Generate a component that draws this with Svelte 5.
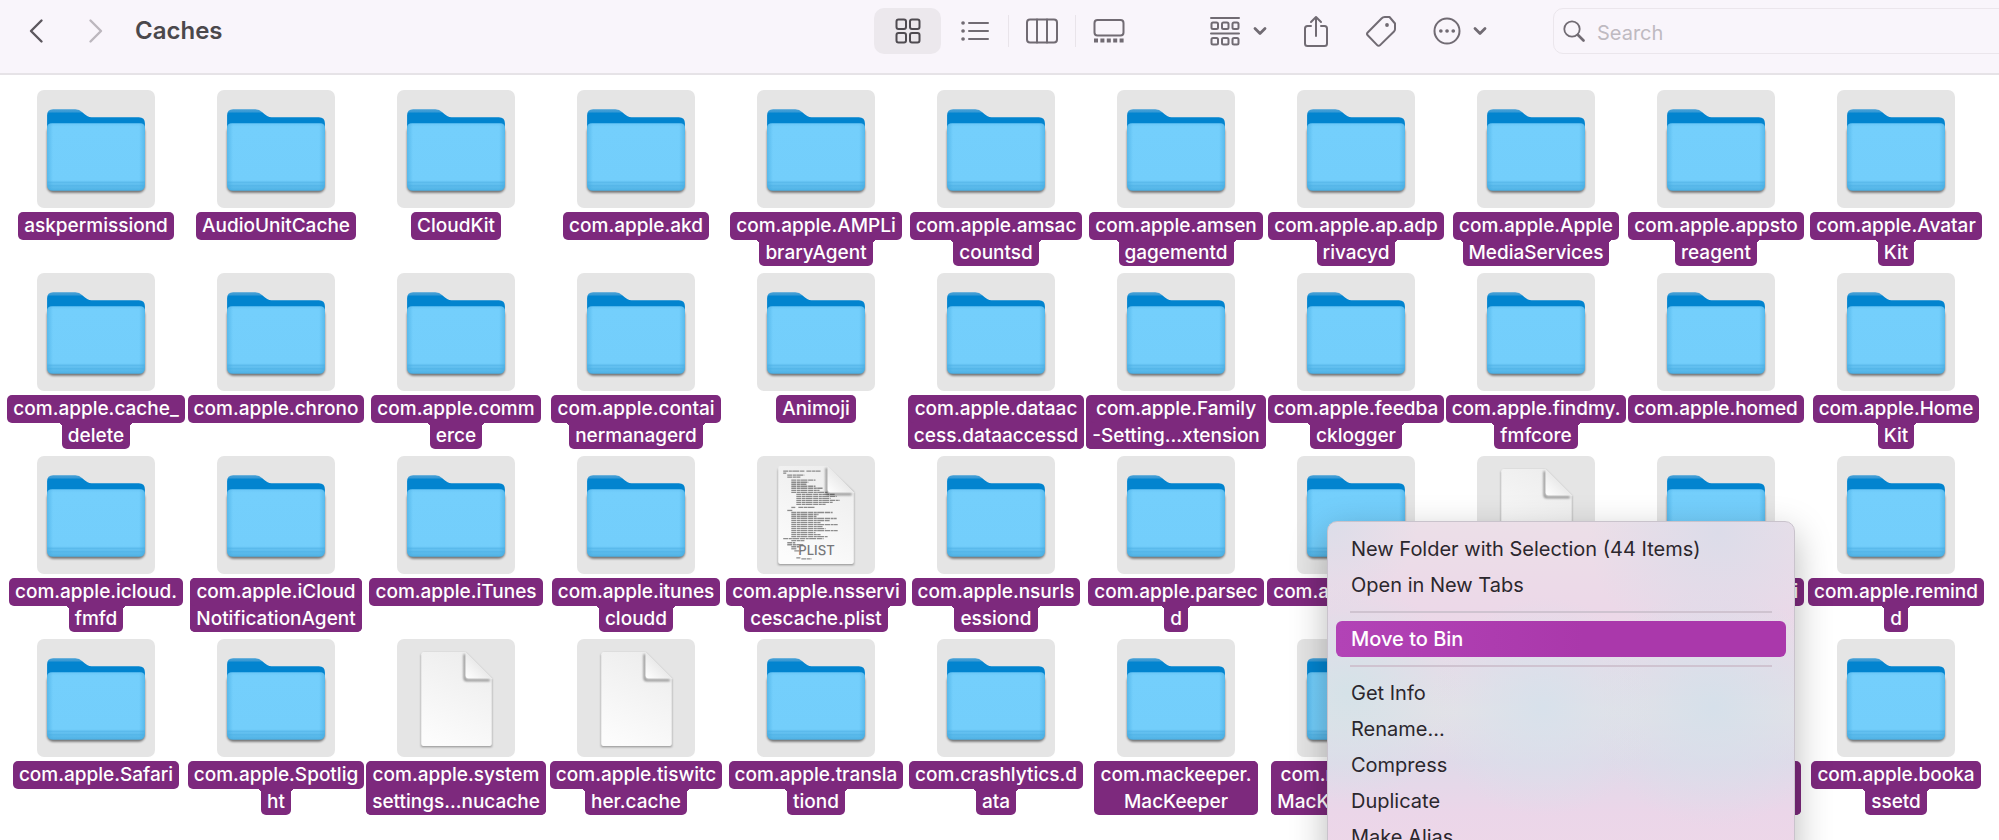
<script>
  const items = [
    ['askpermissiond'],
    ['AudioUnitCache'],
    ['CloudKit'],
    ['com.apple.akd'],
    ['com.apple.AMPLi', 'braryAgent'],
    ['com.apple.amsac', 'countsd'],
    ['com.apple.amsen', 'gagementd'],
    ['com.apple.ap.adp', 'rivacyd'],
    ['com.apple.Apple', 'MediaServices'],
    ['com.apple.appsto', 'reagent'],
    ['com.apple.Avatar', 'Kit'],
    ['com.apple.cache_', 'delete'],
    ['com.apple.chrono'],
    ['com.apple.comm', 'erce'],
    ['com.apple.contai', 'nermanagerd'],
    ['Animoji'],
    ['com.apple.dataac', 'cess.dataaccessd', 'merged'],
    ['com.apple.Family', '-Setting...xtension', 'merged'],
    ['com.apple.feedba', 'cklogger'],
    ['com.apple.findmy.', 'fmfcore'],
    ['com.apple.homed'],
    ['com.apple.Home', 'Kit'],
    ['com.apple.icloud.', 'fmfd'],
    ['com.apple.iCloud', 'NotificationAgent', 'merged'],
    ['com.apple.iTunes'],
    ['com.apple.itunes', 'cloudd'],
    ['com.apple.nsservi', 'cescache.plist', '', 'plist'],
    ['com.apple.nsurls', 'essiond'],
    ['com.apple.parsec', 'd'],
    ['com.apple.passes'],
    ['com.apple.photos', '', '', 'doc'],
    ['com.apple.proacti'],
    ['com.apple.remind', 'd'],
    ['com.apple.Safari'],
    ['com.apple.Spotlig', 'ht'],
    ['com.apple.system', 'settings...nucache', 'merged', 'doc'],
    ['com.apple.tiswitc', 'her.cache', '', 'doc'],
    ['com.apple.transla', 'tiond'],
    ['com.crashlytics.d', 'ata'],
    ['com.mackeeper.', 'MacKeeper', 'merged'],
    ['com.mackeeper.', 'MacKeeperAgent', 'merged'],
    ['com.plausible'],
    ['com.mackeeper.', 'MacKeeperHelpe', 'merged'],
    ['com.apple.booka', 'ssetd']
  ].map(([first, second = '', shape = '', kind = 'folder']) => ({ first, second, shape, kind }));

  const menu = [
    ['New Folder with Selection (44 Items)', 'Open in New Tabs'],
    ['Move to Bin'],
    ['Get Info', 'Rename...', 'Compress', 'Duplicate', 'Make Alias']
  ];

  // Rows of source text on the property-list page: [x, y, width]
  const code = [
    [26, 15, 21], [26, 17, 3], [49, 15, 14], [30, 19, 17], [30, 21, 13], [34, 24, 24], [34, 26, 17],
    [34, 28, 15], [34, 30, 24], [34, 32, 31], [34, 34, 28], [34, 36, 36], [39, 38, 38], [39, 40, 40],
    [39, 42, 34], [39, 44, 43], [39, 46, 36], [39, 48, 29], [34, 51, 4], [41, 51, 16], [30, 54, 5],
    [34, 56, 41], [34, 58, 27], [34, 60, 25], [34, 62, 45], [34, 64, 38], [34, 66, 29], [34, 68, 46],
    [34, 70, 31], [34, 72, 34], [34, 74, 46], [34, 76, 24], [34, 78, 29], [34, 80, 36], [26, 82, 40],
    [34, 84, 13], [30, 86, 8], [30, 88, 16], [34, 90, 8], [34, 92, 5], [37, 94, 7], [39, 101, 4], [44, 102, 10]
  ];

  let chosen = $state('Move to Bin');
</script>

<svelte:head><title>Caches</title></svelte:head>

<svg class="defs" width="0" height="0" aria-hidden="true">
  <defs>
    <linearGradient id="back" x1="0" y1="0" x2="0" y2="1">
      <stop offset="0" stop-color="#449fd6" />
      <stop offset=".09" stop-color="#3b9bd5" />
      <stop offset=".17" stop-color="#0284cf" />
      <stop offset="1" stop-color="#0284cf" />
    </linearGradient>
    <linearGradient id="front" x1="0" y1="0" x2="0" y2="1">
      <stop offset="0" stop-color="#6bc7f7" />
      <stop offset=".05" stop-color="#74cffc" />
      <stop offset=".84" stop-color="#73cefb" />
      <stop offset=".88" stop-color="#64c1f1" />
      <stop offset=".95" stop-color="#59b9ea" />
      <stop offset="1" stop-color="#4cb0e4" />
    </linearGradient>
    <linearGradient id="sides">
      <stop offset="0" stop-color="#3aa5de" stop-opacity=".5" />
      <stop offset=".06" stop-color="#3aa5de" stop-opacity="0" />
      <stop offset=".94" stop-color="#3aa5de" stop-opacity="0" />
      <stop offset="1" stop-color="#3aa5de" stop-opacity=".5" />
    </linearGradient>
    <linearGradient id="paper" x1=".7" y1="0" x2=".3" y2="1">
      <stop offset="0" stop-color="#ededed" />
      <stop offset="1" stop-color="#fcfcfc" />
    </linearGradient>
    <linearGradient id="curl" x1="0" y1="1" x2=".6" y2=".4">
      <stop offset="0" stop-color="#fff" />
      <stop offset="1" stop-color="#e6e6e6" />
    </linearGradient>
    <filter id="soft" x="-20%" y="-20%" width="140%" height="140%"><feGaussianBlur stdDeviation="1.2" /></filter>
  </defs>
</svg>

<div class="window">
  <header>
    <nav aria-label="History">
      <button aria-label="Back"><svg width="16" height="26" viewBox="0 0 16 26"><path d="M13.500 2.500 3 13l10.500 10.500" stroke-width="2.400" /></svg></button>
      <button aria-label="Forward" class="dim"><svg width="16" height="26" viewBox="0 0 16 26"><path d="M2.500 2.500 13 13 2.500 23.500" stroke-width="2.400" /></svg></button>
    </nav>
    <h1>Caches</h1>
    <div class="views">
      <button class="on" aria-label="Icons"><svg width="32" height="30" viewBox="0 0 32 30"><rect x="4.500" y="3.500" width="9.500" height="9.500" rx="2" /><rect x="18" y="3.500" width="9.500" height="9.500" rx="2" /><rect x="4.500" y="17" width="9.500" height="9.500" rx="2" /><rect x="18" y="17" width="9.500" height="9.500" rx="2" /></svg></button>
      <button aria-label="List"><svg width="32" height="30" viewBox="0 0 32 30"><path d="M10 7h19M10 15h19M10 23h19" /><path d="M4 7h.1M4 15h.1M4 23h.1" stroke-width="3.600" /></svg></button>
      <button class="ruled" aria-label="Columns"><svg width="34" height="30" viewBox="0 0 34 30"><rect x="2" y="3.500" width="30" height="23" rx="3" /><path d="M12 3.500v23M22 3.500v23" /></svg></button>
      <button class="ruled" aria-label="Gallery"><svg width="34" height="30" viewBox="0 0 34 30"><rect x="2.500" y="4" width="29" height="15.500" rx="3" /><path d="M2 24.500h30" stroke-width="4" stroke-dasharray="4 2.400" stroke-linecap="butt" /></svg></button>
    </div>
    <div class="actions">
      <button aria-label="Group"><svg width="32" height="30" viewBox="0 0 32 30"><path d="M2 2h28M2 17.500h28" /><g><rect x="2.500" y="6.500" width="6.500" height="6.500" rx="1.500" /><rect x="13" y="6.500" width="6.500" height="6.500" rx="1.500" /><rect x="23.500" y="6.500" width="6" height="6.500" rx="1.500" /><rect x="2.500" y="22" width="6.500" height="6.500" rx="1.500" /><rect x="13" y="22" width="6.500" height="6.500" rx="1.500" /><rect x="23.500" y="22" width="6" height="6.500" rx="1.500" /></g></svg><svg width="14" height="10" viewBox="0 0 14 10"><path d="m2 2.500 5 5 5-5" stroke-width="2.800" /></svg></button>
      <button aria-label="Share"><svg width="26" height="34" viewBox="0 0 26 34"><path d="M8 12H4.500a2.500 2.500 0 0 0-2.500 2.500v15A2.500 2.500 0 0 0 4.500 32h17a2.500 2.500 0 0 0 2.500-2.500v-15a2.500 2.500 0 0 0-2.500-2.500H18M13 22V3.500M8 8l5-5 5 5" /></svg></button>
      <button aria-label="Tags"><svg width="32" height="32" viewBox="0 0 32 32"><path d="M16.500 3.500 2.700 17.500a2 2 0 0 0 0 2.800l9.500 9.800a2 2 0 0 0 2.900 0L29 16.500a3 3 0 0 0 1-2.200V8.500L24.500 2h-4.700a5 5 0 0 0-3.300 1.500Z" /><circle cx="22" cy="10" r="1.900" class="dot" /></svg></button>
      <button aria-label="More"><svg width="28" height="28" viewBox="0 0 28 28"><circle cx="14" cy="14" r="12.500" /><path d="M7.800 14h.1M14 14h.1M20.200 14h.1" stroke-width="3.600" /></svg><svg width="14" height="10" viewBox="0 0 14 10"><path d="m2 2.500 5 5 5-5" stroke-width="2.800" /></svg></button>
    </div>
    <label class="search">
      <svg width="22" height="22" viewBox="0 0 22 22"><circle cx="9" cy="9" r="7.700" stroke-width="1.800" /><path d="m15 15 5.500 5.500" stroke-width="2.600" /></svg>
      <input type="text" placeholder="Search" aria-label="Search" />
    </label>
  </header>

  <ul class="files">
    {#each items as item}
      <li>
        <svg class="tile" viewBox="0 0 117 117" aria-hidden="true">
          {#if item.kind === 'folder'}
            <rect x="10" y="36" width="97" height="66" rx="6" fill="#000" opacity=".5" filter="url(#soft)" />
            <path d="M10 44V25q0-6 6-6h22q4 0 7 3 5 5 9 5h47q6 0 6 6v11Z" fill="url(#back)" />
            <path d="M10 38q0-5 5-5h87q5 0 5 5v56q0 6-6 6H16q-6 0-6-6Z" fill="url(#front)" />
            <path d="M10 38q0-5 5-5h87q5 0 5 5v56q0 6-6 6H16q-6 0-6-6Z" fill="url(#sides)" />
            <path d="M10.500 91.500h96M11 95h95" stroke="#49aee3" stroke-opacity=".45" />
          {:else if item.kind === 'doc'}
            <path d="M26 14h42l26 26v67H24V16Z" fill="#000" opacity=".38" filter="url(#soft)" />
            <path d="M26 13h42l26 26v65q0 2-2 2H26q-2 0-2-2V15q0-2 2-2Z" fill="url(#paper)" />
            <path d="M67 15v24q0 2 2 2h23" fill="none" stroke="#000" stroke-opacity=".45" stroke-width="2" filter="url(#soft)" />
            <path d="M68 13v23q0 3 3 3h23Z" fill="url(#curl)" />
          {:else}
            <path d="M23 12h47l26 24v72H21V14Z" fill="#000" opacity=".38" filter="url(#soft)" />
            <path d="M23 10h47l26 26v69q0 2-2 2H23q-2 0-2-2V12q0-2 2-2Z" fill="url(#paper)" />
            {#each code as [x, y, w]}
              <path d="M{x} {y}h{Math.min(w, y < 36 ? 68 - x : 54)}" stroke="#555" stroke-width="1.300" stroke-dasharray="5 .6 3 .4 7 .7" opacity=".65" />
            {/each}
            <path d="M69 12v24q0 2 2 2h23" fill="none" stroke="#000" stroke-opacity=".45" stroke-width="2" filter="url(#soft)" />
            <path d="M70 10v23q0 3 3 3h23Z" fill="url(#curl)" />
            <text x="59" y="98" text-anchor="middle">PLIST</text>
          {/if}
        </svg>
        <div class="name {item.shape}">
          <span>{item.first}</span>
          {#if item.second}<span class="second">{item.second}</span>{/if}
        </div>
      </li>
    {/each}
  </ul>

  <div class="menu" role="menu">
    {#each menu as group, i}
      {#if i > 0}<hr />{/if}
      {#each group as entry}
        <button role="menuitem" class:active={chosen === entry} onmouseenter={() => (chosen = entry)}>{entry}</button>
      {/each}
    {/each}
  </div>
</div>

<style>
  :global(body) {
    margin: 0;
    background: #fff;
  }
  .defs {
    position: absolute;
  }
  .window {
    position: relative;
    height: 100vh;
    overflow: hidden;
    font-family: Inter, 'Liberation Sans', sans-serif;
    color: #4b484c;
  }
  button {
    border: 0;
    padding: 0;
    background: none;
    font: inherit;
    color: inherit;
  }
  header {
    display: flex;
    align-items: flex-start;
    box-sizing: border-box;
    height: 75px;
    padding-top: 8px;
    background: #f9f5fb;
    border-bottom: 2px solid #e6e3e7;
  }
  header svg {
    fill: none;
    stroke: #716b73;
    stroke-width: 2;
    stroke-linecap: round;
    stroke-linejoin: round;
  }
  header .dot {
    fill: #716b73;
    stroke: none;
  }
  header button {
    display: flex;
    align-items: center;
    justify-content: center;
    height: 46px;
  }
  nav {
    display: flex;
    gap: 44px;
    padding: 0 31px 0 28px;
  }
  nav svg {
    stroke: #5c575e;
  }
  nav .dim svg {
    stroke: #bcb7be;
  }
  h1 {
    flex: 1;
    margin: 0;
    font-size: 24px;
    font-weight: 600;
    line-height: 46px;
  }
  .views {
    display: flex;
  }
  .views button {
    position: relative;
    width: 67px;
  }
  .views .on {
    background: #ece8ed;
    border-radius: 10px;
  }
  .views .on svg {
    stroke: #4f4b51;
  }
  .views .ruled::before {
    content: '';
    position: absolute;
    left: 0;
    top: 7px;
    width: 1px;
    height: 32px;
    background: #e9e4ea;
  }
  .actions {
    display: flex;
    gap: 36px;
    padding: 0 66px 0 67px;
  }
  .actions button {
    gap: 12px;
  }
  .search {
    display: flex;
    align-items: center;
    gap: 12px;
    box-sizing: border-box;
    width: 458px;
    height: 46px;
    margin-right: -12px;
    padding-left: 9px;
    border: 1px solid #ebe6ec;
    border-radius: 10px;
  }
  .search input {
    flex: 1;
    min-width: 0;
    height: 40px;
    padding: 4px 0 0;
    border: 0;
    outline: 0;
    background: none;
    font: 400 20px Inter, sans-serif;
    color: #4b484c;
  }
  .search input::placeholder {
    color: #bfbac1;
  }
  .files {
    display: grid;
    grid-template-columns: repeat(11, 1fr);
    grid-auto-rows: 183px;
    margin: 0;
    padding: 15px 13px 0 6px;
    list-style: none;
  }
  .files li {
    display: flex;
    flex-direction: column;
    align-items: center;
    gap: 4px;
    min-width: 0;
  }
  .tile {
    flex: none;
    width: 118px;
    height: 118px;
    background: #e5e5e5;
    border-radius: 7px;
  }
  .tile text {
    font: 500 13px Inter, sans-serif;
    fill: #77777a;
  }
  .name {
    display: flex;
    flex-direction: column;
    align-items: center;
    font-size: 19px;
    font-weight: 500;
    line-height: 28px;
    color: #fff;
    white-space: nowrap;
  }
  .name span {
    position: relative;
    padding: 0 6px;
    border-radius: 5px;
    background: #7d297d;
  }
  .name .second {
    line-height: 26px;
    border-radius: 0 0 5px 5px;
  }
  .name .second::before,
  .name .second::after {
    content: '';
    position: absolute;
    top: 0;
    width: 4px;
    height: 4px;
  }
  .name .second::before {
    right: 100%;
    background: radial-gradient(circle at 0 100%, transparent 4px, #7d297d 4px);
  }
  .name .second::after {
    left: 100%;
    background: radial-gradient(circle at 100% 100%, transparent 4px, #7d297d 4px);
  }
  .merged {
    background: #7d297d;
    border-radius: 5px;
  }
  .merged .second::before,
  .merged .second::after {
    display: none;
  }
  .menu {
    position: absolute;
    left: 1327px;
    top: 521px;
    display: flex;
    flex-direction: column;
    box-sizing: border-box;
    width: 468px;
    padding: 9px 8px;
    border: 1px solid #c9c3cc;
    border-radius: 10px;
    color: #2b272d;
    background:
      radial-gradient(circle at 0 0, #dcdde9, transparent 90px),
      radial-gradient(circle at 390px 10px, #dcdce9, transparent 130px),
      radial-gradient(circle at 20px 170px, #d5e2e8, transparent 110px),
      radial-gradient(circle at 215px 185px, #d8e1eb, transparent 110px),
      radial-gradient(circle at 385px 185px, #d6e0ea, transparent 120px),
      linear-gradient(#ecdfe8 0, #ecd8e8 90px, #e5dde8 150px, #e4e2e7 190px, #e0dae9 240px, #ebd6e9 290px, #edd7e8 330px);
    box-shadow: 0 12px 36px rgb(0 0 0 / 28%);
  }
  .menu button {
    height: 36px;
    padding: 0 15px;
    border-radius: 6px;
    font-size: 20px;
    line-height: 36px;
    text-align: left;
    white-space: nowrap;
  }
  .menu .active {
    color: #fff;
    font-weight: 500;
    background: linear-gradient(90deg, #b243b6, #aa38ab 55%, #aa38ab);
  }
  .menu hr {
    width: auto;
    height: 2px;
    margin: 8px 14px;
    border: 0;
    background: #cfc3d0;
  }
</style>
